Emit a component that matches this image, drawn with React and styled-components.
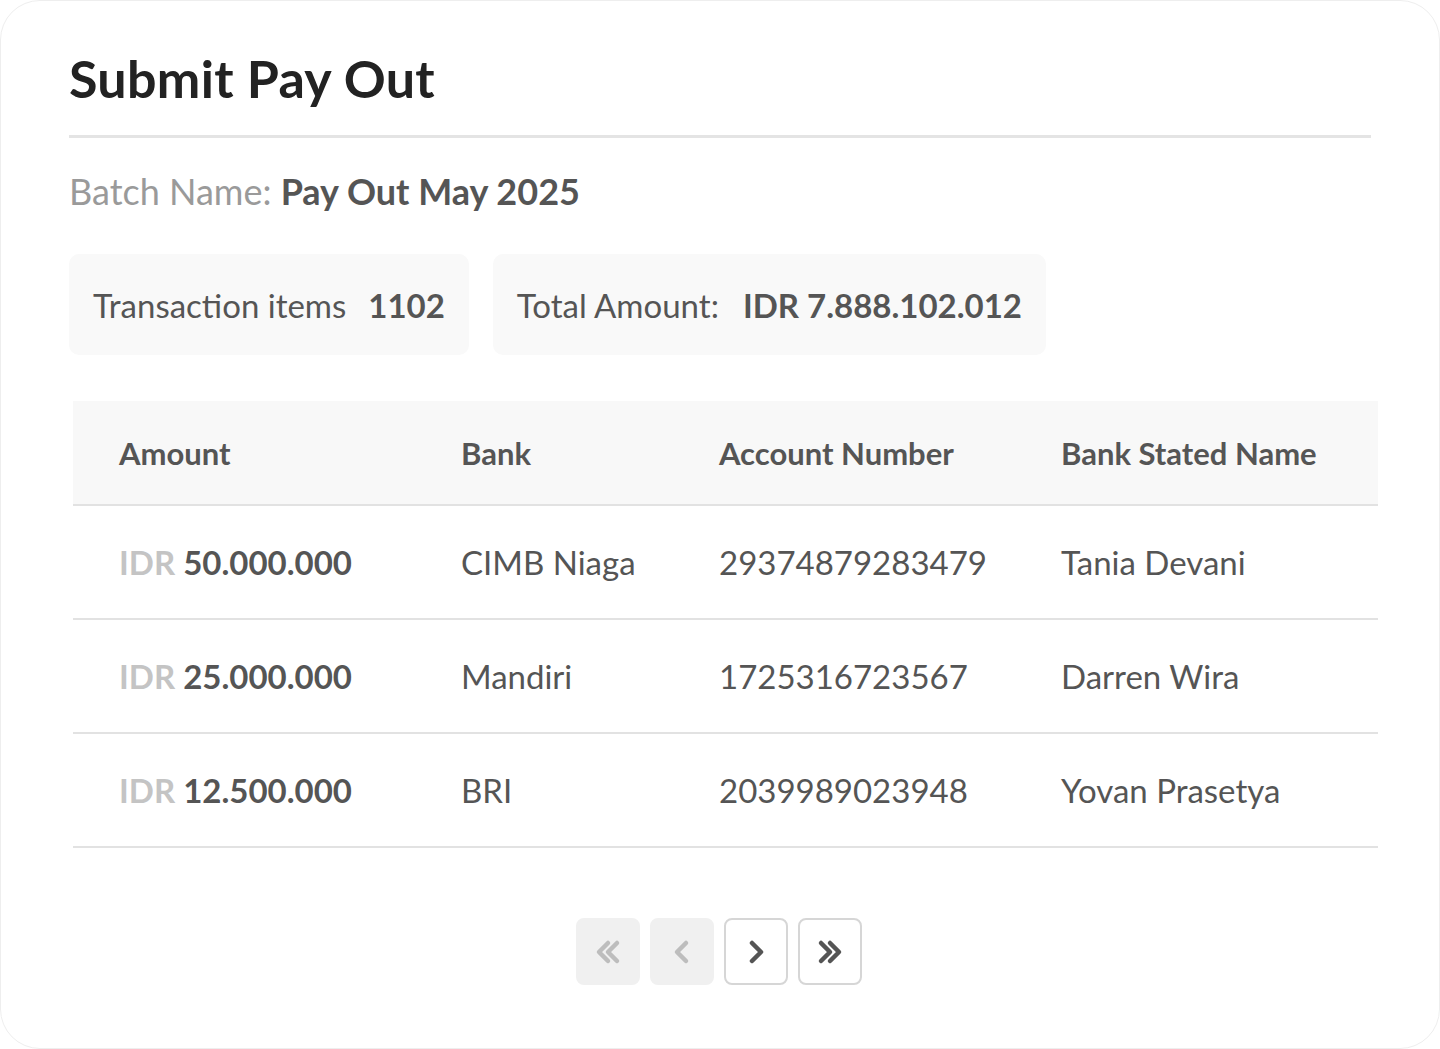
import React from "react";
import styled, { createGlobalStyle } from "styled-components";

const Global = createGlobalStyle`
  html, body { margin: 0; background: #fff; }
  body { font-family: Lato, "Open Sans", sans-serif; }
`;

const Card = styled.div`
  box-sizing: border-box;
  width: 1440px; height: 1049px;
  border: 1px solid #eee; border-radius: 40px;
  padding: 44px 63px 0 68px;
  background: #fff;
`;
const Title = styled.h1`
  margin: 0; font-size: 52px; font-weight: 700; color: #222; line-height: 66px;
  letter-spacing: 0.3px;
`;
const Divider = styled.hr`
  margin: 24px 5px 0 0; border: 0; border-top: 3px solid #e4e4e4;
`;
const Batch = styled.div`
  margin-top: 30px; font-size: 36px; color: #9a9a9a; line-height: 46px;
  b { color: #555; font-weight: 700; }
`;
const Stats = styled.div`
  display: flex; gap: 24px; margin-top: 40px;
`;
const Stat = styled.div`
  background: #f9f9f9; border-radius: 10px; height: 101px;
  display: flex; align-items: center; padding: 0 24px; gap: ${p => p.$gap}px;
  font-size: 33px; color: #555;
  b { font-weight: 700; }
`;
const Table = styled.div`
  margin: 46px 0 0 4px; width: 1305px;
`;
const Row = styled.div`
  display: grid; grid-template-columns: 342px 258px 342px 1fr;
  padding-left: 46px; align-items: center;
  height: ${p => (p.$head ? 103 : 112)}px;
  background: ${p => (p.$head ? "#f8f8f8" : "#fff")};
  border-bottom: 2px solid #e2e2e2;
  font-size: ${p => (p.$head ? 31 : 33)}px;
  font-weight: ${p => (p.$head ? 700 : 400)};
  color: #555;
`;
const Amt = styled.span`
  font-weight: 700; color: #555;
  span { color: #c4c4c4; }
`;
const Pager = styled.div`
  display: flex; justify-content: center; gap: 10px; margin-top: 70px; padding-right: 8px;
`;
const PBtn = styled.div`
  box-sizing: border-box; width: 64px; height: 67px; border-radius: 8px;
  display: flex; align-items: center; justify-content: center;
  background: ${p => (p.$disabled ? "#f0f0f0" : "#fff")};
  border: 2px solid ${p => (p.$disabled ? "#f0f0f0" : "#d6d6d6")};
  color: ${p => (p.$disabled ? "#bdbdbd" : "#555")};
`;

const Chev = ({ d }) => (
  <svg width="40" height="40" viewBox="0 0 40 40" fill="none" stroke="currentColor" strokeWidth="4.5" strokeLinecap="round" strokeLinejoin="round">
    <path d={d} />
  </svg>
);

const rows = [
  ["50.000.000", "CIMB Niaga", "29374879283479", "Tania Devani"],
  ["25.000.000", "Mandiri", "1725316723567", "Darren Wira"],
  ["12.500.000", "BRI", "2039989023948", "Yovan Prasetya"],
];

export default function App() {
  return (
    <>
      <Global />
      <Card>
        <Title>Submit Pay Out</Title>
        <Divider />
        <Batch>Batch Name: <b>Pay Out May 2025</b></Batch>
        <Stats>
          <Stat $gap={22}>Transaction items <b>1102</b></Stat>
          <Stat $gap={24}>Total Amount: <b>IDR 7.888.102.012</b></Stat>
        </Stats>
        <Table>
          <Row $head><div>Amount</div><div>Bank</div><div>Account Number</div><div>Bank Stated Name</div></Row>
          {rows.map(r => (
            <Row key={r[2]}>
              <Amt><span>IDR</span> {r[0]}</Amt>
              <div>{r[1]}</div><div>{r[2]}</div><div>{r[3]}</div>
            </Row>
          ))}
        </Table>
        <Pager>
          <PBtn $disabled><Chev d="M20 11 L11 20 L20 29 M29 11 L20 20 L29 29" /></PBtn>
          <PBtn $disabled><Chev d="M24 11 L15 20 L24 29" /></PBtn>
          <PBtn><Chev d="M16 11 L25 20 L16 29" /></PBtn>
          <PBtn><Chev d="M11 11 L20 20 L11 29 M20 11 L29 20 L20 29" /></PBtn>
        </Pager>
      </Card>
    </>
  );
}
